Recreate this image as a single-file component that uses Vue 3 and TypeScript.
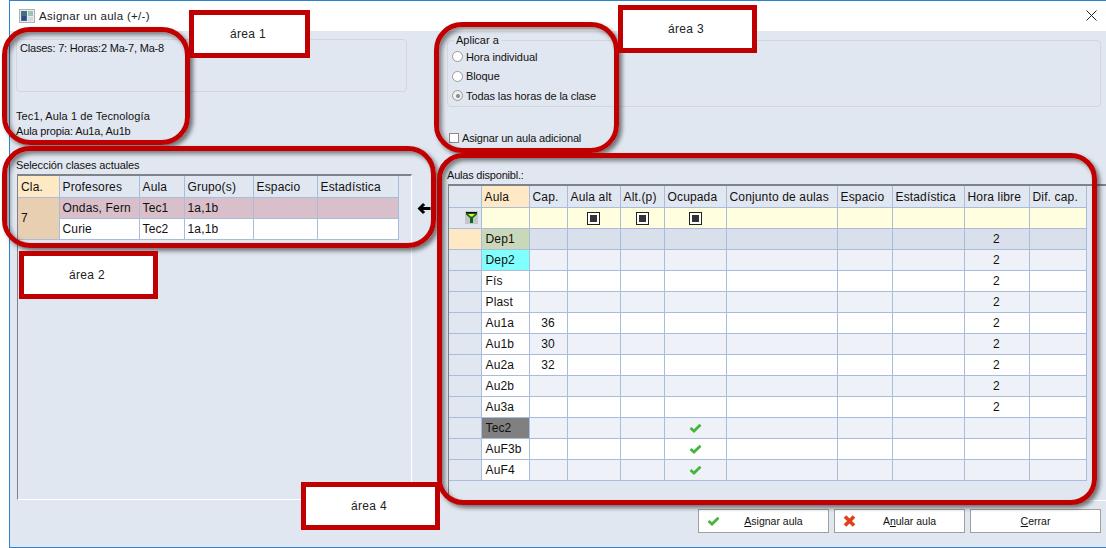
<script setup lang="ts">
const leftCols = [41, 80, 45, 69, 64, 81]
const rightCols = [32, 48, 38, 53, 44, 62, 111, 55, 72, 65, 57]
const sum = (a: number[]) => a.reduce((s, n) => s + n, 0)
const rightHeads = ['', 'Aula', 'Cap.', 'Aula alt', 'Alt.(p)', 'Ocupada', 'Conjunto de aulas', 'Espacio', 'Estadística', 'Hora libre', 'Dif. cap.']
interface Room { name: string; cap?: string; free?: string; busy?: boolean; cls?: string }
const rooms: Room[] = [
  { name: 'Dep1', free: '2', cls: 'dep1' },
  { name: 'Dep2', free: '2', cls: 'dep2' },
  { name: 'Fís', free: '2' },
  { name: 'Plast', free: '2' },
  { name: 'Au1a', cap: '36', free: '2' },
  { name: 'Au1b', cap: '30', free: '2' },
  { name: 'Au2a', cap: '32', free: '2' },
  { name: 'Au2b', free: '2' },
  { name: 'Au3a', free: '2' },
  { name: 'Tec2', busy: true, cls: 'tec' },
  { name: 'AuF3b', busy: true },
  { name: 'AuF4', busy: true },
]
const notes = [
  { text: 'área 1', cls: 'n1' },
  { text: 'área 2', cls: 'n2' },
  { text: 'área 3', cls: 'n3' },
  { text: 'área 4', cls: 'n4' },
]
</script>

<template>
  <div class="page">
    <div class="window">
      <header class="title">
        <svg class="appicon" width="16" height="14" viewBox="0 0 16 14">
          <rect x="0.5" y="0.5" width="15" height="13" fill="#e8ecf0" stroke="#a8b0b8" />
          <rect x="2" y="2" width="6" height="10" fill="#3f6f80" />
          <rect x="3" y="7" width="4" height="4" fill="#2c4a8c" />
          <rect x="9" y="2" width="5" height="5" fill="#9cc4b0" />
          <rect x="9" y="8" width="5" height="4" fill="#d0d8e0" />
        </svg>
        <span class="title-text">Asignar un aula (+/-)</span>
        <svg class="close" width="11" height="11" viewBox="0 0 11 11">
          <path d="M0.5 0.5 10.5 10.5M10.5 0.5 0.5 10.5" stroke="#222" stroke-width="1" fill="none" />
        </svg>
      </header>

      <main class="body">
        <section class="left">
          <div class="info-box">Clases: 7: Horas:2 Ma-7, Ma-8</div>
          <div class="info-lines">
            <div class="l1">Tec1, Aula 1 de Tecnología</div>
            <div class="l2">Aula propia: Au1a, Au1b</div>
          </div>
          <div class="sel-label">Selección clases actuales</div>
          <div class="grid-wrap left-wrap">
            <table class="grid" :style="{ width: sum(leftCols) + 'px' }">
              <colgroup><col v-for="(w, i) in leftCols" :key="i" :style="{ width: w + 'px' }" /></colgroup>
              <thead>
                <tr>
                  <th class="hl">Cla.</th><th>Profesores</th><th>Aula</th><th>Grupo(s)</th><th>Espacio</th><th>Estadística</th>
                </tr>
              </thead>
              <tbody>
                <tr class="picked">
                  <td rowspan="2" class="cla">7</td><td>Ondas, Fern</td><td>Tec1</td><td>1a,1b</td><td></td><td></td>
                </tr>
                <tr class="plain">
                  <td>Curie</td><td>Tec2</td><td>1a,1b</td><td></td><td></td>
                </tr>
              </tbody>
            </table>
          </div>
        </section>

        <div class="mid">
          <svg width="14" height="13" viewBox="0 0 14 13">
            <path d="M0.5 6.5 6 1 8.2 3.1 6 5H13.5V8H6L8.2 9.9 6 12Z" fill="#000" />
          </svg>
        </div>

        <section class="right">
          <fieldset class="apply">
            <legend>Aplicar a</legend>
            <label class="radio"><span class="dot"></span>Hora individual</label>
            <label class="radio"><span class="dot"></span>Bloque</label>
            <label class="radio"><span class="dot on"></span>Todas las horas de la clase</label>
          </fieldset>
          <label class="extra"><span class="box"></span>Asignar un aula adicional</label>
          <div class="avail-label">Aulas disponibl.:</div>
          <div class="grid-wrap right-wrap">
            <table class="grid" :style="{ width: sum(rightCols) + 'px' }">
              <colgroup><col v-for="(w, i) in rightCols" :key="i" :style="{ width: w + 'px' }" /></colgroup>
              <thead>
                <tr><th v-for="(h, i) in rightHeads" :key="i" :class="{ hl: i === 1 }">{{ h }}</th></tr>
              </thead>
              <tbody>
                <tr class="filter">
                  <td class="rowhead fcell">
                    <svg class="funnel" width="13" height="13" viewBox="0 0 13 13">
                      <rect width="13" height="13" fill="#c4c8cc" />
                      <path d="M1 1.5H12V3.5L8 7V12H5V7L1 3.5Z" fill="#0a6a1a" />
                      <path d="M3 3H10L7.4 5.6H5.6Z" fill="#f4ec20" />
                      <rect x="1" y="1" width="11" height="1.2" fill="#111" />
                    </svg>
                  </td>
                  <td></td><td></td>
                  <td v-for="i in 3" :key="i" class="center"><span class="tri"></span></td>
                  <td></td><td></td><td></td><td></td><td></td>
                </tr>
                <tr v-for="(r, i) in rooms" :key="r.name" :class="i === 0 ? 'sel' : i % 2 ? 'alt' : 'plain'">
                  <td class="rowhead"></td>
                  <td class="name" :class="r.cls">{{ r.name }}</td>
                  <td class="center">{{ r.cap }}</td>
                  <td></td><td></td>
                  <td class="center">
                    <svg v-if="r.busy" class="check" width="13" height="10" viewBox="0 0 13 10">
                      <path d="M1.5 5 5 8 11.5 1.8" fill="none" stroke="#46b53c" stroke-width="2.8" />
                    </svg>
                  </td>
                  <td></td><td></td><td></td>
                  <td class="center">{{ r.free }}</td>
                  <td></td>
                </tr>
              </tbody>
            </table>
          </div>
          <div class="actions">
            <button class="btn with-icon">
              <svg class="bicon" width="13" height="10" viewBox="0 0 13 10">
                <path d="M1.5 5 5 8 11.5 1.8" fill="none" stroke="#46b53c" stroke-width="2.8" />
              </svg>
              <span><u>A</u>signar aula</span>
            </button>
            <button class="btn with-icon">
              <svg class="bicon" width="13" height="13" viewBox="0 0 13 13">
                <path d="M2 2 11 11M11 2 2 11" fill="none" stroke="#e0401a" stroke-width="3.6" />
              </svg>
              <span>A<u>n</u>ular aula</span>
            </button>
            <button class="btn"><span><u>C</u>errar</span></button>
          </div>
        </section>
      </main>
    </div>

    <div class="ring r1"></div>
    <div class="ring r2"></div>
    <div class="ring r3"></div>
    <div class="ring r4"></div>
    <div v-for="n in notes" :key="n.text" class="note" :class="n.cls">{{ n.text }}</div>
  </div>
</template>

<style>
html, body { margin: 0; background: #fff; }
</style>

<style scoped>
.page {
  position: relative;
  width: 1106px;
  height: 548px;
  overflow: hidden;
  padding-left: 9px;
  box-sizing: border-box;
  font-family: "Liberation Sans", Arial, sans-serif;
  font-size: 11px;
  color: #111;
  background: #fff;
}
.window {
  height: 100%;
  box-sizing: border-box;
  border: 1px solid #2a84d2;
  border-right: 0;
  display: flex;
  flex-direction: column;
  background: #e1e7f0;
}
.title {
  height: 30px;
  flex: none;
  background: #fff;
  display: flex;
  align-items: center;
  padding: 0 9px;
  gap: 4px;
}
.appicon { margin-top: -1px; }
.title-text { font-size: 11.5px; letter-spacing: 0.3px; color: #222; margin-top: -1px; }
.close { margin-left: auto; margin-top: -2px; }
.body { flex: 1; display: flex; min-height: 0; }
.left { width: 396px; flex: none; padding: 8px 0 0 6px; box-sizing: border-box; display: flex; flex-direction: column; }
.info-box {
  width: 391px;
  height: 53px;
  flex: none;
  box-sizing: border-box;
  border: 1px solid #d3d7dc;
  border-radius: 4px;
  padding: 1px 3px;
  line-height: 14px;
  letter-spacing: -0.2px;
}
.info-lines { margin-top: 17px; line-height: 15px; }
.l1 { letter-spacing: 0.1px; }
.l2 { letter-spacing: -0.15px; }
.sel-label { margin-top: 19px; height: 15px; line-height: 15px; letter-spacing: -0.1px; }
.grid-wrap { box-sizing: border-box; border-top: 2px solid #7f8387; border-left: 1px solid #7f8387; border-bottom: 1px solid #fff; border-right: 1px solid #fff; }
.left-wrap { width: 395px; height: 326px; margin-left: 1px; margin-top: 1px; flex: none; }
.grid { border-collapse: collapse; table-layout: fixed; font-size: 12px; letter-spacing: 0.15px; }
.grid th, .grid td {
  border: 1px solid #a9bcd9;
  height: 21px;
  padding: 0 3px;
  box-sizing: border-box;
  font-weight: 400;
  text-align: left;
  white-space: nowrap;
  overflow: hidden;
}
.grid tr > :first-child { border-left: 0; }
.grid thead th { border-top: 0; background: #e1e7f0; padding-top: 1px; }
.grid th.hl { background: #ffe8c4; }
.cla { background: #e9cfb1; }
.picked td { background: #d9bfca; }
.picked td.cla { background: #e9cfb1; }
.plain td { background: #fff; }
.plain td.rowhead { background: #e1e7f0; }
.alt td { background: #eef2f8; }
.alt td.rowhead { background: #e1e7f0; }
.sel td { background: #d9e0ec; }
.sel td.rowhead { background: #ffe8c4; }
.filter td { background: #ffffe0; }
.filter td.rowhead { background: #e1e7f0; }
.fcell { text-align: right; padding: 0 1px 0 0; }
.funnel { display: block; margin-left: auto; }
.name { background: #fff !important; padding-left: 4px !important; }
.name.dep1 { background: #c9d8b9 !important; }
.name.dep2 { background: #80ffff !important; }
.name.tec { background: #808080 !important; }
.center { text-align: center !important; }
.tri {
  display: inline-block;
  width: 13px;
  height: 13px;
  box-sizing: border-box;
  border: 1px solid #222;
  background: #fff;
  position: relative;
  vertical-align: middle;
}
.tri::after { content: ""; position: absolute; inset: 2px; background: #333; }
.check { display: block; margin: 0 auto; }

.mid { width: 41px; flex: none; padding-top: 171px; padding-left: 11px; box-sizing: border-box; }
.mid svg { display: block; }
.right { flex: 1; min-width: 0; padding-top: 4px; display: flex; flex-direction: column; }
.apply {
  margin: 0;
  width: 654px;
  height: 72px;
  flex: none;
  box-sizing: border-box;
  border: 1px solid #d3d7dc;
  border-radius: 4px;
  padding: 0 0 0 4px;
  display: flex;
  flex-direction: column;
}
.apply legend { padding: 0 2px; margin-left: 2px; font-size: 11px; line-height: 10px; }
.radio { display: flex; align-items: center; gap: 3px; height: 19.5px; letter-spacing: -0.1px; flex: none; }
.apply .radio:first-of-type { margin-top: 2px; }
.dot {
  width: 11px; height: 11px; box-sizing: border-box; flex: none;
  border: 1px solid #9a9a9a; border-radius: 50%; background: #fff; position: relative;
}
.dot.on { background: #f0f0f0; }
.dot.on::after { content: ""; position: absolute; inset: 2.5px; border-radius: 50%; background: #8a8a8a; }
.extra { display: flex; align-items: center; gap: 3px; margin: 23px 0 0 2px; height: 16px; letter-spacing: -0.15px; flex: none; }
.box { width: 10px; height: 10px; box-sizing: border-box; border: 1px solid #8a8a8a; background: #fff; flex: none; }
.avail-label { margin-top: 22px; height: 15px; line-height: 15px; letter-spacing: -0.2px; flex: none; }
.right-wrap { height: 317px; width: 660px; margin-top: 1px; margin-left: 1px; flex: none; }
.right-wrap .grid th:first-child { padding: 0; }
.actions {
  display: flex;
  justify-content: flex-end;
  gap: 5px;
  margin-top: 8px;
  padding-right: 5px;
}
.btn {
  position: relative;
  width: 131px;
  height: 24px;
  box-sizing: border-box;
  border: 1px solid #a0a0a0;
  background: #fff;
  padding: 0;
  font: inherit;
  font-size: 10.5px;
  color: #111;
}
.with-icon { padding-left: 20px; }
.bicon { position: absolute; left: 8px; top: 50%; transform: translateY(-50%); }

.ring {
  position: absolute;
  box-sizing: border-box;
  border: 5px solid #c00000;
  box-shadow: 3px 3px 4px rgba(0, 0, 0, 0.5), inset 3px 3px 4px rgba(0, 0, 0, 0.45);
}
.r1 { left: 2px; top: 27px; width: 188px; height: 118px; border-radius: 28px; }
.r2 { left: 2px; top: 146px; width: 434px; height: 102px; border-radius: 28px; }
.r3 { left: 434px; top: 22px; width: 185px; height: 131px; border-radius: 28px; }
.r4 { left: 437px; top: 153px; width: 660px; height: 352px; border-radius: 26px; }
.note {
  position: absolute;
  box-sizing: border-box;
  border: 5px solid #c00000;
  background: #fff;
  display: flex;
  align-items: center;
  justify-content: center;
  padding-right: 3px;
  font-size: 12px;
  letter-spacing: 0.3px;
  color: #222;
}
.n1 { left: 189px; top: 10px; width: 121px; height: 48px; }
.n2 { left: 19px; top: 251px; width: 139px; height: 48px; }
.n3 { left: 618px; top: 5px; width: 139px; height: 48px; }
.n4 { left: 301px; top: 482px; width: 139px; height: 48px; }
</style>
